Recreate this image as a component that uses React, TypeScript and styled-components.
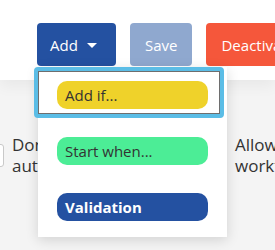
import React from 'react';
import styled, { createGlobalStyle } from 'styled-components';

const GlobalStyle = createGlobalStyle`
  html, body {
    margin: 0;
    padding: 0;
    background: #f4f4f4;
    font-family: 'Open Sans', 'Liberation Sans', sans-serif;
  }
  body {
    width: 275px;
    height: 250px;
    overflow: hidden;
  }
`;

const Page = styled.div`
  width: 275px;
  height: 250px;
  position: relative;
  overflow: hidden;
  background: #f4f4f4;
`;

const Header = styled.div`
  height: 80px;
  box-sizing: border-box;
  padding: 23px 0 0 37px;
  display: flex;
  align-items: flex-start;
  gap: 14px;
  background: #fff;
  box-shadow: 0 6px 14px rgba(0, 0, 0, 0.05);
  position: relative;
  z-index: 1;
`;

const Button = styled.button<{ $tone: 'primary' | 'muted' | 'danger' }>`
  flex-shrink: 0;
  height: 43px;
  border: 0;
  border-radius: 4px;
  display: flex;
  align-items: center;
  gap: 9px;
  padding: 0 15px;
  font-family: inherit;
  font-size: 15px;
  color: #fff;
  white-space: nowrap;
  background: ${(p) =>
    p.$tone === 'primary' ? '#2451a1' : p.$tone === 'muted' ? '#8fa8cf' : '#f5573b'};
`;

const AddButton = styled(Button)`
  width: 79px;
  padding: 0 0 0 13px;
`;

const Caret = styled.span`
  width: 0;
  height: 0;
  border-left: 5px solid transparent;
  border-right: 5px solid transparent;
  border-top: 5px solid #fff;
  margin-top: 1px;
`;

const AddWrap = styled.div`
  position: relative;
  flex-shrink: 0;
`;

const Menu = styled.ul`
  position: absolute;
  top: calc(100% + 1px);
  left: 1px;
  width: 189px;
  height: 170px;
  margin: 0;
  padding: 0;
  list-style: none;
  background: #fff;
  box-shadow: 0 3px 12px rgba(0, 0, 0, 0.14);
  z-index: 5;
`;

const MenuItem = styled.li<{ $focused?: boolean }>`
  position: relative;
  height: 56px;
  box-sizing: border-box;
  padding-left: 19px;
  display: flex;
  align-items: center;

  ${(p) =>
    p.$focused &&
    `
    &::after {
      content: '';
      position: absolute;
      left: -4px;
      top: 0;
      width: 190px;
      height: 51px;
      box-sizing: border-box;
      border: 4px solid #5bbde6;
      border-radius: 4px;
      box-shadow: inset 0 0 0 1px #6e6e6e;
    }
  `}
`;

const Pill = styled.span<{ $color: string; $light?: boolean }>`
  width: 151px;
  height: 28px;
  box-sizing: border-box;
  padding-left: 8px;
  border-radius: 10px;
  display: flex;
  align-items: center;
  font-size: 15px;
  background: ${(p) => p.$color};
  color: ${(p) => (p.$light ? '#fff' : '#333')};
  font-weight: ${(p) => (p.$light ? 700 : 400)};
`;

const Content = styled.div`
  padding-top: 54px;
  margin-left: -18px;
  display: grid;
  grid-template-columns: 223px 223px;
`;

const Option = styled.label`
  display: flex;
  align-items: center;
  gap: 8px;
`;

const Checkbox = styled.span`
  width: 22px;
  height: 23px;
  flex-shrink: 0;
  box-sizing: border-box;
  background: #fff;
  border: 1px solid #c9c9c9;
  border-radius: 3px;
`;

const OptionText = styled.span`
  width: 100px;
  font-size: 17px;
  line-height: 21px;
  color: #333;
`;

export default function App() {
  return (
    <Page>
      <GlobalStyle />
      <Header>
        <AddWrap>
          <AddButton $tone="primary">
            Add
            <Caret />
          </AddButton>
          <Menu>
            <MenuItem $focused>
              <Pill $color="#efd22a">Add if...</Pill>
            </MenuItem>
            <MenuItem>
              <Pill $color="#4ced96">Start when...</Pill>
            </MenuItem>
            <MenuItem>
              <Pill $color="#2451a1" $light>
                Validation
              </Pill>
            </MenuItem>
          </Menu>
        </AddWrap>
        <Button $tone="muted">Save</Button>
        <Button $tone="danger">Deactivate</Button>
      </Header>
      <Content>
        <Option>
          <Checkbox />
          <OptionText>Don't automate</OptionText>
        </Option>
        <Option>
          <Checkbox />
          <OptionText>Allow workflows</OptionText>
        </Option>
      </Content>
    </Page>
  );
}
